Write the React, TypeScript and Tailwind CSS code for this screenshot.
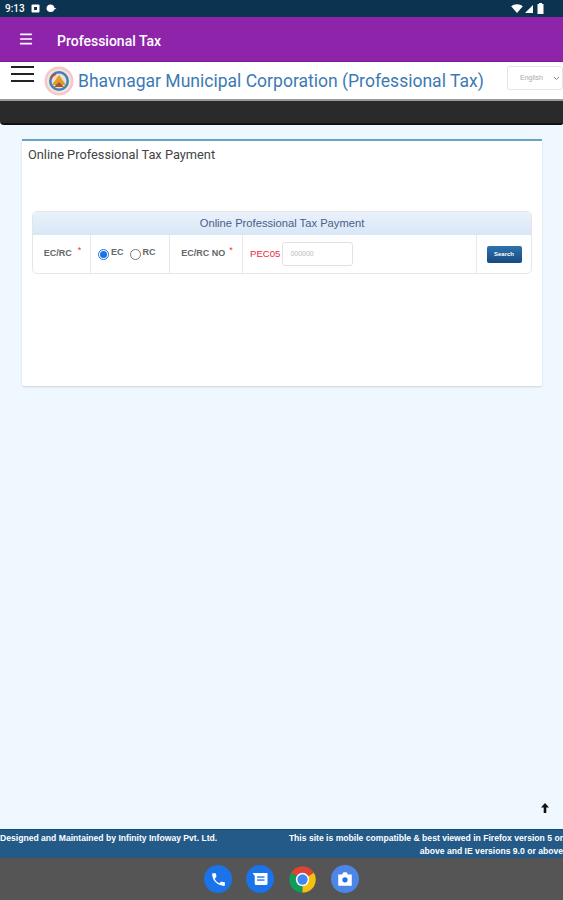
import { Menu } from 'lucide-react'

const cellText = "font-['Liberation_Sans',sans-serif]"

function StatusBar() {
  return (
    <div className="flex h-[17px] shrink-0 items-center justify-between bg-[#0c3350] pl-[5px] pr-[18px]">
      <div className="flex items-center gap-[6px]">
        <span className="font-['Roboto',sans-serif] text-[10px] font-medium text-white">9:13</span>
        <svg width="9" height="9" viewBox="0 0 9 9">
          <rect x="0.5" y="0.5" width="8" height="8" rx="1" fill="#fff" />
          <rect x="3" y="3" width="3" height="3" fill="#0c3350" />
        </svg>
        <svg width="11" height="9" viewBox="0 0 11 9">
          <path d="M4.500 0.5a4 4 0 0 1 4 3.500h2l-2 1.500a4 4 0 0 1-4 2.500 3.800 3.800 0 0 1-4-3.800 3.800 3.800 0 0 1 4-3.700z" fill="#fff" />
        </svg>
      </div>
      <div className="flex items-center gap-[1px]">
        <svg width="12" height="9" viewBox="0 0 13 10">
          <path d="M0 2.500C3.500-.6 9.500-.6 13 2.500L6.500 10z" fill="#fff" />
        </svg>
        <svg width="10" height="10" viewBox="0 0 10 10">
          <path d="M9 1v8H1z" fill="#fff" />
        </svg>
        <svg width="9" height="11" viewBox="0 0 9 11" className="ml-[1px]">
          <path d="M3 0h3v1h1.500v10h-6V1H3z" fill="#fff" />
        </svg>
      </div>
    </div>
  )
}

function Emblem() {
  return (
    <svg width="30" height="30" viewBox="0 0 30 30" className="shrink-0">
      <circle cx="15" cy="15" r="14.500" fill="#f6c6cf" />
      <circle cx="15" cy="15" r="12" fill="#f3e6d2" />
      <circle cx="15" cy="15" r="10" fill="#3d7fc4" />
      <circle cx="15" cy="15" r="7.500" fill="#e9e2c8" />
      <path d="M8 19l7-10 7 10z" fill="#e39a2d" />
      <path d="M10 21h10l-5-5z" fill="#a9552b" />
      <path d="M7 13a8.500 8.500 0 0 1 5-5" stroke="#d8452f" strokeWidth="1.500" fill="none" />
    </svg>
  )
}

function NavIcons() {
  return (
    <div className="flex h-[42px] shrink-0 items-center justify-center gap-[14px] bg-[#555555]">
      <div className="flex h-[28px] w-[28px] items-center justify-center rounded-full bg-[#1a73e8]">
        <svg width="17" height="17" viewBox="0 0 24 24">
          <path
            d="M6.600 10.800c1.400 2.800 3.800 5.100 6.600 6.600l2.200-2.200c.3-.3.700-.4 1-.2 1.100.4 2.300.6 3.600.6.600 0 1 .4 1 1V20c0 .6-.4 1-1 1C10.600 21 3 13.400 3 4c0-.6.400-1 1-1h3.500c.6 0 1 .4 1 1 0 1.300.2 2.500.6 3.600.1.300 0 .7-.2 1z"
            fill="#fff"
          />
        </svg>
      </div>
      <div className="flex h-[28px] w-[28px] items-center justify-center rounded-full bg-[#1a73e8]">
        <svg width="18" height="18" viewBox="0 0 24 24">
          <path d="M2 4h20v14a2 2 0 0 1-2 2H7a2 2 0 0 1-2-2V8z" fill="#fff" />
          <rect x="8" y="8.500" width="10" height="1.800" fill="#1a73e8" />
          <rect x="8" y="12.500" width="10" height="1.800" fill="#1a73e8" />
        </svg>
      </div>
      <svg width="29" height="29" viewBox="0 0 48 48">
        <path d="M24 24 L5 13 A22 22 0 0 1 43 13 Z" fill="#db4437" />
        <path d="M24 24 L5 13 A22 22 0 0 0 24 46 Z" fill="#0f9d58" />
        <path d="M24 24 L43 13 A22 22 0 0 1 24 46 Z" fill="#f4c20d" />
        <circle cx="24" cy="24" r="11" fill="#fff" />
        <circle cx="24" cy="24" r="8.500" fill="#4285f4" />
      </svg>
      <div className="flex h-[28px] w-[28px] items-center justify-center rounded-full bg-[#4c86e6]">
        <svg width="18" height="18" viewBox="0 0 24 24">
          <path d="M3 6h5l2-3h4l2 3h5v15H3z" fill="#fff" />
          <circle cx="12" cy="13" r="3.500" fill="#1a73e8" />
        </svg>
      </div>
    </div>
  )
}

export default function App() {
  return (
    <div className="flex h-screen flex-col overflow-hidden bg-[#f0f8ff]">
      <StatusBar />

      {/* App bar */}
      <div className="flex h-[45px] shrink-0 items-center gap-[23px] border-b border-[#7d1a9c] bg-[#8e24aa] pl-[18px]">
        <Menu size={16} strokeWidth={2.500} className="text-white" />
        <span className="pt-[5px] font-['Roboto',sans-serif] text-[14px] font-medium text-white">Professional Tax</span>
      </div>

      {/* Site header */}
      <div className="relative flex h-[39px] shrink-0 items-center border-b-2 border-[#9a9a9a] bg-white">
        <div className="mb-[13px] ml-[11px] flex w-[23px] flex-col gap-[5px]">
          <div className="h-[2px] bg-[#222]" />
          <div className="h-[2px] bg-[#222]" />
          <div className="h-[2px] bg-[#222]" />
        </div>
        <div className="ml-[10px]">
          <Emblem />
        </div>
        <span className="ml-[4px] whitespace-nowrap pt-[2px] font-['Roboto',sans-serif] text-[17.550px] text-[#3c7ab5]">
          Bhavnagar Municipal Corporation (Professional Tax)
        </span>
        <div className="absolute left-[507px] top-[4px] flex h-[24px] w-[56px] items-center justify-between rounded-[3px] border border-[#e4e4e4] pl-[12px] pr-[2px]">
          <span className={`${cellText} text-[7px] text-[#aaa]`}>English</span>
          <svg width="7" height="5" viewBox="0 0 7 5">
            <path d="M1 1l2.500 2.500L6 1" stroke="#888" fill="none" />
          </svg>
        </div>
      </div>

      {/* Black menu bar */}
      <div className="h-[24px] shrink-0 rounded-bl-[4px] rounded-br-[2px] border-b-2 border-[#111] bg-[#2a2a2a]" />

      {/* Content */}
      <div className="relative flex-1 px-[22px] pt-[14px] pr-[21px]">
        <div className="h-[247px] rounded-b-[2px] border-t-2 border-[#6ba3c8] bg-white px-[10px] shadow-[0_1px_2px_rgba(0,0,0,0.15)]">
          <div className="-ml-[4px] pt-[4px] font-['Roboto',sans-serif] text-[12.800px] text-[#444]">
            Online Professional Tax Payment
          </div>

          {/* Search panel */}
          <div className="mt-[47px] overflow-hidden rounded-[5px] border border-[#e6e6e6]">
            <div className={`${cellText} flex h-[23px] items-center justify-center bg-gradient-to-b from-[#eaf2fb] to-[#d8e7f7] text-[11.200px] text-[#4a5d8a]`}>
              Online Professional Tax Payment
            </div>
            <div className={`${cellText} flex h-[38px] items-center text-[9px] text-[#666]`}>
              <div className="flex h-full w-[58px] items-center justify-center gap-[6px] border-r border-[#e8e8e8] pl-[2px]">
                <span className="font-bold">EC/RC</span>
                <span className="mb-[6px] text-[#e33]">*</span>
              </div>
              <div className="flex h-full w-[79px] items-center border-r border-[#e8e8e8] pl-[7px]">
                <span className="flex h-[11px] w-[11px] items-center justify-center rounded-full border border-[#1a73e8] bg-white">
                  <span className="h-[7px] w-[7px] rounded-full bg-[#1a73e8]" />
                </span>
                <span className="mb-[3px] ml-[2px] font-bold">EC</span>
                <span className="ml-[6px] h-[11px] w-[11px] rounded-full border border-[#777] bg-white" />
                <span className="mb-[3px] ml-[2px] font-bold">RC</span>
              </div>
              <div className="flex h-full w-[73px] items-center justify-center gap-[4px] border-r border-[#e8e8e8] pl-[2px]">
                <span className="font-bold">EC/RC NO</span>
                <span className="mb-[6px] text-[#e33]">*</span>
              </div>
              <div className="flex h-full w-[234px] items-center border-r border-[#e8e8e8] pl-[7px]">
                <span className="text-[9.600px] text-[#f0263c]">PEC05</span>
                <div className="ml-[2px] flex h-[24px] w-[71px] items-center rounded-[3px] border border-[#e2e2e2] pl-[7px] text-[7px] text-[#bbb]">
                  000000
                </div>
              </div>
              <div className="flex flex-1 items-center justify-center">
                <div className="flex h-[17px] w-[35px] items-center justify-center rounded-[2px] bg-gradient-to-b from-[#2f74ad] to-[#17497f] text-[6px] font-bold text-white">
                  Search
                </div>
              </div>
            </div>
          </div>
        </div>

        <svg width="8" height="10" viewBox="0 0 8 10" className="absolute bottom-[16px] right-[14px]">
          <path d="M4 0l4 4.500H5.300V10H2.700V4.500H0z" fill="#111" />
        </svg>
      </div>

      {/* Footer */}
      <div className={`${cellText} flex h-[29px] shrink-0 justify-between border-t border-[#174a70] bg-[#235a88] pt-[2px] text-[8.600px] font-bold leading-[13px] text-white`}>
        <div className="whitespace-nowrap">Designed and Maintained by Infinity Infoway Pvt. Ltd.</div>
        <div className="w-[276px] whitespace-nowrap text-right">
          <div>This site is mobile compatible &amp; best viewed in Firefox version 5 or</div>
          <div>above and IE versions 9.0 or above</div>
        </div>
      </div>

      <NavIcons />
    </div>
  )
}
